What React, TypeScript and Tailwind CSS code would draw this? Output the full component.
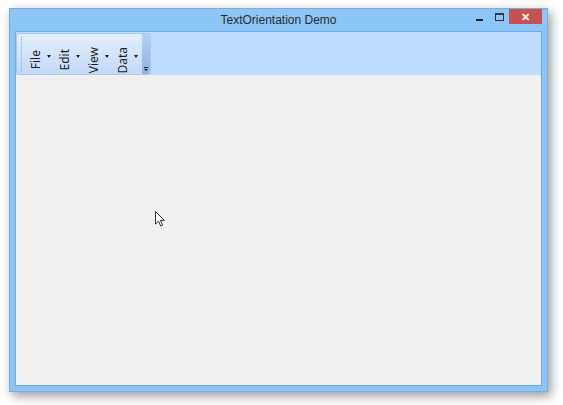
import React from "react";

const items = ["File", "Edit", "View", "Data"];

function Arrow() {
  return (
    <span className="block h-0 w-0 border-l-[2.5px] border-r-[2.5px] border-t-[3px] border-l-transparent border-r-transparent border-t-[#1e1e1e]" />
  );
}

function ToolItem({ label }: { label: string }) {
  return (
    <div className="flex h-full w-[29px] items-center">
      <div className="flex h-full w-[20px] items-center justify-end pt-[12px]">
        <span className="rotate-180 text-[12px] leading-[16px] text-[#1e1e1e] [writing-mode:vertical-rl]">
          {label}
        </span>
      </div>
      <div className="flex h-full w-[9px] items-start justify-center pt-[21px]">
        <Arrow />
      </div>
    </div>
  );
}

function Grip() {
  return (
    <div className="flex w-[7px] flex-col items-center gap-[1px] pl-[1px] pt-[3px]">
      {Array.from({ length: 18 }).map((_, i) => (
        <span key={i} className="block h-[1px] w-[1px] bg-[#8aa9d3]" />
      ))}
    </div>
  );
}

function Cursor() {
  return (
    <svg width="12" height="18" viewBox="0 0 12 18" className="absolute left-[155px] top-[211px]">
      <path
        d="M0.5 0.5 L0.5 13 L3.5 10.2 L5.7 15 L7.6 14.1 L5.4 9.4 L9.4 9.4 Z"
        fill="#ffffff"
        stroke="#333333"
        strokeWidth="1"
        strokeLinejoin="round"
      />
    </svg>
  );
}

export default function App() {
  return (
    <div className="relative h-[405px] w-[563px] bg-white pl-[9px] pt-[8px] font-['Noto_Sans','Liberation_Sans',sans-serif]">
      <div className="flex h-[384px] w-[539px] flex-col border border-[#76aee4] bg-[#8cc6f7] shadow-[3px_4px_10px_rgba(0,0,0,0.4)]">
        {/* title bar */}
        <div className="relative flex h-[22px] items-center justify-center">
          <span className="font-['Liberation_Sans',sans-serif] text-[12px] text-[#2b2b2b]">TextOrientation Demo</span>
          <div className="absolute right-[5px] top-0 flex items-start">
            <div className="flex h-[15px] w-[20px] items-center justify-center pt-[7px]">
              <span className="block h-[2px] w-[7px] bg-[#222]" />
            </div>
            <div className="flex h-[15px] w-[20px] items-center justify-center">
              <span className="block h-[8px] w-[9px] border border-t-[2px] border-[#333]" />
            </div>
            <div className="flex h-[15px] w-[33px] items-center justify-center bg-[#c75050]">
              <span className="text-[11px] font-bold leading-none text-white">✕</span>
            </div>
          </div>
        </div>
        {/* client */}
        <div className="mx-[5px] mb-[5px] flex flex-1 flex-col border border-[#72a8dc] bg-[#f0f0f0]">
          <div className="flex h-[43px] bg-[#bedcfe] pt-[1px]">
            <div className="flex h-[42px] rounded-[3px] border border-[#a9c9f0] bg-gradient-to-b from-[#e3eefd] to-[#c3d9f8]">
              <Grip />
              {items.map((it) => (
                <ToolItem key={it} label={it} />
              ))}
              <div className="w-[2px]" />
              <div className="flex w-[8px] flex-col items-center justify-end rounded-r-[3px] bg-gradient-to-b from-[#b6d0f2] to-[#8fb3e3] pb-[3px]">
                <span className="mb-[1px] block h-[1px] w-[4px] bg-[#222]" />
                <span className="block h-0 w-0 border-l-[2px] border-r-[2px] border-t-[2px] border-l-transparent border-r-transparent border-t-[#222]" />
              </div>
            </div>
          </div>
          <div className="flex-1" />
        </div>
      </div>
      <Cursor />
    </div>
  );
}
